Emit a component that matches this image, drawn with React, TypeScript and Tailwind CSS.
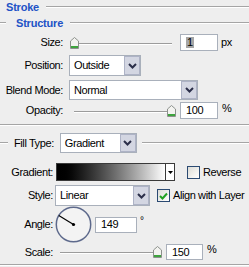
const Etched = ({ className = "" }: { className?: string }) => (
  <div className={`h-0 border-t border-t-[#a5a5a5] border-b border-b-white ${className}`} />
);

function Chevron() {
  return (
    <svg width="9" height="6" viewBox="0 0 9 6">
      <polyline points="1,1 4.5,4.5 8,1" fill="none" stroke="#2b2f4a" strokeWidth="2" />
    </svg>
  );
}

function Select({ value, w, h }: { value: string; w: string; h: string }) {
  return (
    <div className={`flex ${w} ${h} bg-white border border-[#a9b0bb]`}>
      <div className="flex-1 flex items-center pl-[4px] text-black">{value}</div>
      <div className="w-[16px] h-full flex items-center justify-center bg-[#d3d6e2] border border-[#aeb3c6]">
        <Chevron />
      </div>
    </div>
  );
}

function Thumb() {
  return (
    <svg width="9" height="12" viewBox="0 0 9 12">
      <polygon points="4.5,0.5 8.5,4 8.5,11.5 0.5,11.5 0.5,4" fill="#f3f3f0" stroke="#8d918d" />
      <rect x="1" y="9" width="7" height="2" fill="#3ea43e" />
    </svg>
  );
}

function Slider({ w, trackLeft, trackRight, thumbLeft }: { w: string; trackLeft: string; trackRight: string; thumbLeft: string }) {
  return (
    <div className={`relative h-full ${w}`}>
      <div className={`absolute top-1/2 ${trackLeft} ${trackRight} h-0 border-t border-t-[#9c9c9c] border-b border-b-white`} />
      <div className={`absolute top-1/2 -translate-y-1/2 ${thumbLeft} flex`}>
        <Thumb />
      </div>
    </div>
  );
}

function Input({ value, w, h, selected = false }: { value: string; w: string; h: string; selected?: boolean }) {
  return (
    <div className={`flex items-center ${w} ${h} bg-white border border-[#a9b0bb] pl-[5px]`}>
      {selected ? <span className="bg-[#a6a6a6] px-[1px] leading-[11px]">{value}</span> : value}
    </div>
  );
}

function Checkbox({ checked = false }: { checked?: boolean }) {
  return (
    <div className="w-[13px] h-[13px] border border-[#2b4a72] bg-gradient-to-br from-[#dcdcd6] to-white flex items-center justify-center">
      {checked && (
        <svg width="9" height="8" viewBox="0 0 9 8">
          <polyline points="1,4 3.5,6.5 8,1.5" fill="none" stroke="#21a121" strokeWidth="2" />
        </svg>
      )}
    </div>
  );
}

function Dial() {
  return (
    <svg width="37" height="37" viewBox="0 0 37 37">
      <circle cx="18.5" cy="18.5" r="17.2" fill="#f3f3f3" stroke="#5e6a8c" strokeWidth="1.5" />
      <line x1="18.5" y1="18.5" x2="3.8" y2="9.6" stroke="#000" strokeWidth="1.2" />
      <circle cx="18.5" cy="18.5" r="1.6" fill="#000" />
    </svg>
  );
}

export default function App() {
  return (
    <div className="w-[249px] h-[267px] overflow-hidden bg-[#eeeeee] font-['Liberation_Sans',Arial,sans-serif] text-[11px] tracking-[-0.4px] text-black">
      {/* Stroke title */}
      <div className="flex items-center h-[14px] pl-[6px]">
        <span className="font-bold text-[#2152c6] tracking-[-0.2px]">Stroke</span>
        <Etched className="flex-1 ml-[7px]" />
      </div>

      {/* Structure legend */}
      <div className="flex items-center h-[16px] mt-[1px]">
        <Etched className="w-[6px]" />
        <span className="ml-[10px] font-bold text-[#2152c6] tracking-[-0.2px]">Structure</span>
        <Etched className="flex-1 ml-[7px]" />
      </div>

      {/* Size */}
      <div className="flex items-center h-[17px] mt-[3px]">
        <div className="w-[64px] text-right pr-[1px]">Size:</div>
        <div className="ml-[5px] h-full flex">
          <Slider w="w-[106px]" trackLeft="left-[7px]" trackRight="right-[3px]" thumbLeft="left-[1px]" />
        </div>
        <div className="ml-[5px]">
          <Input value="1" w="w-[38px]" h="h-[17px]" selected />
        </div>
        <span className="ml-[3px]">px</span>
      </div>

      {/* Position */}
      <div className="flex items-center h-[21px] mt-[4px]">
        <div className="w-[64px] text-right pr-[1px]">Position:</div>
        <div className="ml-[5px]">
          <Select value="Outside" w="w-[72px]" h="h-[21px]" />
        </div>
      </div>

      {/* Blend Mode */}
      <div className="flex items-center h-[20px] mt-[4px]">
        <div className="w-[64px] text-right pr-[1px]">Blend Mode:</div>
        <div className="ml-[5px]">
          <Select value="Normal" w="w-[129px]" h="h-[20px]" />
        </div>
      </div>

      {/* Opacity */}
      <div className="flex items-center h-[17px] mt-[2px]">
        <div className="w-[64px] text-right pr-[1px]">Opacity:</div>
        <div className="ml-[5px] h-full flex">
          <Slider w="w-[106px]" trackLeft="left-[5px]" trackRight="right-[3px]" thumbLeft="left-[98px]" />
        </div>
        <div className="ml-[5px]">
          <Input value="100" w="w-[38px]" h="h-[17px]" />
        </div>
        <span className="ml-[4px] -mt-[4px]">%</span>
      </div>

      <Etched className="mt-[5px]" />

      {/* Fill Type legend */}
      <div className="flex items-center h-[20px] mt-[7px]">
        <Etched className="w-[8px]" />
        <span className="ml-[6px]">Fill Type:</span>
        <div className="ml-[6px]">
          <Select value="Gradient" w="w-[77px]" h="h-[20px]" />
        </div>
        <Etched className="flex-1 ml-[5px]" />
      </div>

      {/* Gradient */}
      <div className="flex items-center h-[18px] mt-[10px]">
        <div className="w-[53px] text-right">Gradient:</div>
        <div className="ml-[3px] flex w-[119px] h-[18px] border border-[#3a3a3a] bg-white">
          <div className="flex-1 bg-gradient-to-r from-black to-white" />
          <div className="w-[9px] border-l border-[#3a3a3a] flex items-center justify-center">
            <svg width="5" height="3" viewBox="0 0 5 3">
              <polygon points="0,0 5,0 2.5,3" fill="#000" />
            </svg>
          </div>
        </div>
        <div className="ml-[12px]">
          <Checkbox />
        </div>
        <span className="ml-[3px]">Reverse</span>
      </div>

      {/* Style */}
      <div className="flex items-center h-[21px] mt-[4px]">
        <div className="w-[53px] text-right">Style:</div>
        <div className="ml-[2px]">
          <Select value="Linear" w="w-[95px]" h="h-[21px]" />
        </div>
        <div className="ml-[7px]">
          <Checkbox checked />
        </div>
        <span className="ml-[3px]">Align with Layer</span>
      </div>

      {/* Angle */}
      <div className="flex items-center h-[36px]">
        <div className="w-[53px] text-right">Angle:</div>
        <div className="ml-[2px] flex">
          <Dial />
        </div>
        <div className="ml-[3px] mt-[1px]">
          <Input value="149" w="w-[42px]" h="h-[16px]" />
        </div>
        <span className="ml-[3px] -mt-[8px] text-[10px]">°</span>
      </div>

      {/* Scale */}
      <div className="flex items-center h-[16px] mt-[2px]">
        <div className="w-[53px] text-right">Scale:</div>
        <div className="ml-[2px] h-full flex">
          <Slider w="w-[108px]" trackLeft="left-[5px]" trackRight="right-[6px]" thumbLeft="left-[98px]" />
        </div>
        <div className="ml-[3px]">
          <Input value="150" w="w-[37px]" h="h-[16px]" />
        </div>
        <span className="ml-[4px] -mt-[5px]">%</span>
      </div>

      <Etched className="mt-[4px]" />
    </div>
  );
}
